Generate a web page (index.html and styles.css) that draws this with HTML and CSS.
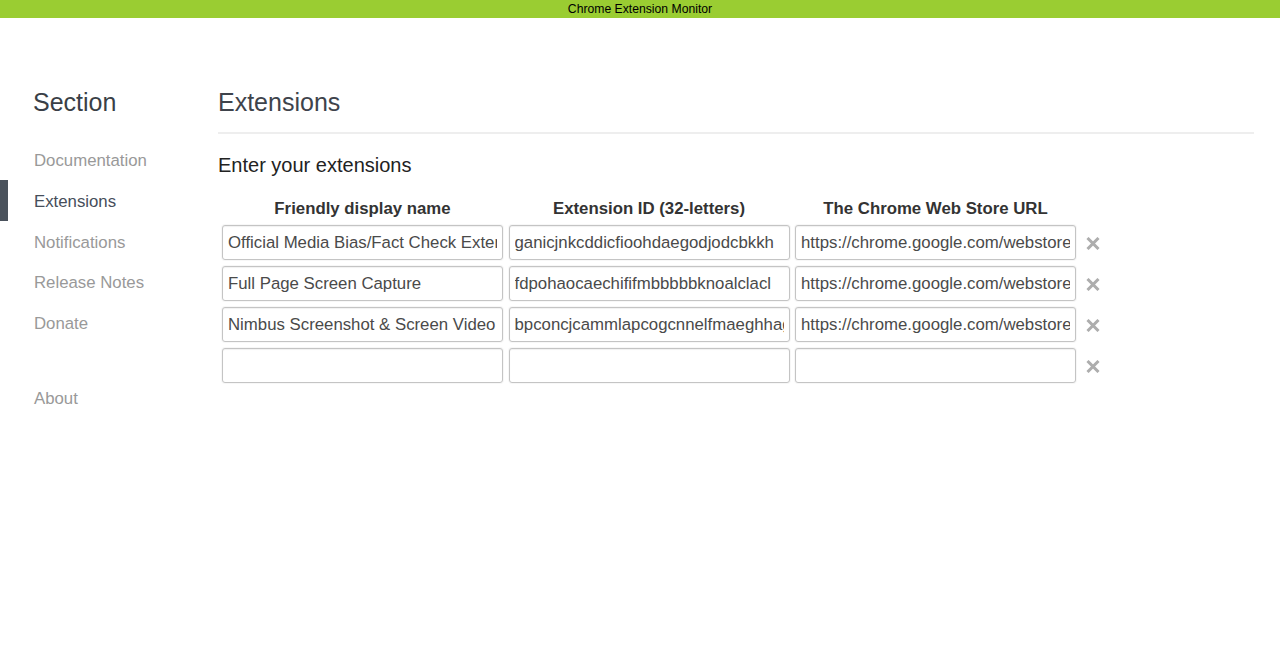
FILE: index.html
```html
<!DOCTYPE html>
<html lang="en">
<head>
<meta charset="utf-8">
<title>Chrome Extension Monitor</title>
<link rel="stylesheet" href="styles.css">
</head>
<body>
<div class="topbar">Chrome Extension Monitor</div>
<div class="layout">
  <nav class="sidebar">
    <h1 class="side-title">Section</h1>
    <ul class="nav">
      <li>Documentation</li>
      <li class="active">Extensions</li>
      <li>Notifications</li>
      <li>Release Notes</li>
      <li>Donate</li>
    </ul>
    <ul class="nav nav-about">
      <li>About</li>
    </ul>
  </nav>
  <main class="content">
    <h1 class="page-title">Extensions</h1>
    <h2 class="sub-title">Enter your extensions</h2>
    <div class="ext-grid">
      <div class="col-head">Friendly display name</div>
      <div class="col-head">Extension ID (32-letters)</div>
      <div class="col-head">The Chrome Web Store URL</div>
      <div class="col-head"></div>

      <input class="field" type="text" value="Official Media Bias/Fact Check Extension">
      <input class="field" type="text" value="ganicjnkcddicfioohdaegodjodcbkkh">
      <input class="field" type="text" value="https://chrome.google.com/webstore/detail/ganicjnkcddicfioohdaegodjodcbkkh">
      <div class="remove"><svg viewBox="0 0 14 13" width="14" height="13"><path d="M1.5 1 L12.5 12 M12.5 1 L1.5 12" stroke="#adadad" stroke-width="3" fill="none"/></svg></div>

      <input class="field" type="text" value="Full Page Screen Capture">
      <input class="field" type="text" value="fdpohaocaechififmbbbbbknoalclacl">
      <input class="field" type="text" value="https://chrome.google.com/webstore/detail/fdpohaocaechififmbbbbbknoalclacl">
      <div class="remove"><svg viewBox="0 0 14 13" width="14" height="13"><path d="M1.5 1 L12.5 12 M12.5 1 L1.5 12" stroke="#adadad" stroke-width="3" fill="none"/></svg></div>

      <input class="field" type="text" value="Nimbus Screenshot &amp; Screen Video Recorder">
      <input class="field" type="text" value="bpconcjcammlapcogcnnelfmaeghhagj">
      <input class="field" type="text" value="https://chrome.google.com/webstore/detail/bpconcjcammlapcogcnnelfmaeghhagj">
      <div class="remove"><svg viewBox="0 0 14 13" width="14" height="13"><path d="M1.5 1 L12.5 12 M12.5 1 L1.5 12" stroke="#adadad" stroke-width="3" fill="none"/></svg></div>

      <input class="field" type="text" value="">
      <input class="field" type="text" value="">
      <input class="field" type="text" value="">
      <div class="remove"><svg viewBox="0 0 14 13" width="14" height="13"><path d="M1.5 1 L12.5 12 M12.5 1 L1.5 12" stroke="#adadad" stroke-width="3" fill="none"/></svg></div>
    </div>
  </main>
</div>
</body>
</html>
```
FILE: styles.css
```css
html, body {
  margin: 0;
  padding: 0;
  background: #ffffff;
  font-family: "Liberation Sans", Arial, sans-serif;
}

.topbar {
  height: 18px;
  line-height: 18px;
  background: #9acd32;
  color: #000;
  text-align: center;
  font-size: 12.2px;
}

.layout {
  display: flex;
  padding-top: 68.5px;
}

.sidebar {
  width: 218px;
  flex: none;
}

.side-title {
  margin: 0;
  padding-left: 33px;
  font-size: 25px;
  line-height: 30px;
  font-weight: normal;
  color: #3a3f47;
}

.nav {
  list-style: none;
  margin: 23px 0 0;
  padding: 0;
}

.nav li {
  box-sizing: border-box;
  height: 40.75px;
  line-height: 40.75px;
  padding-top: 1.5px;
  font-size: 16.8px;
  color: #999;
  border-left: 8px solid transparent;
  padding-left: 26px;
}

.nav li.active {
  color: #464e5a;
  border-left-color: #4a525c;
}

.nav-about {
  margin-top: 34px;
}

.content {
  flex: 1;
  padding-right: 26px;
}

.page-title {
  margin: 0;
  font-size: 25px;
  line-height: 30px;
  font-weight: normal;
  color: #3e434b;
  padding-bottom: 15.5px;
  border-bottom: 2px solid #eeeeee;
}

.sub-title {
  margin: 19.4px 0 0;
  font-size: 20px;
  line-height: 24px;
  font-weight: normal;
  color: #222;
}

.ext-grid {
  margin-top: 20px;
  padding-left: 4px;
  display: grid;
  grid-template-columns: 281px 281px 281px auto;
  column-gap: 5.5px;
  row-gap: 6px;
  justify-content: start;
}

.col-head {
  font-weight: bold;
  font-size: 16.8px;
  line-height: 20px;
  padding-top: 1.6px;
  color: #333;
  text-align: center;
}

.field {
  box-sizing: border-box;
  width: 281px;
  height: 35px;
  margin: 0;
  padding: 2px 5px 0;
  border: 1px solid #c4c4c4;
  border-radius: 3px;
  box-shadow: inset 0 1px 1px rgba(0, 0, 0, 0.06), 0 0 0 1px rgba(0, 0, 0, 0.03);
  font-family: "Liberation Sans", Arial, sans-serif;
  font-size: 16.8px;
  color: #4a4a4a;
  background: #fff;
  outline: none;
}

.remove {
  height: 35px;
  display: flex;
  align-items: center;
  padding-left: 4.5px;
  padding-top: 2px;
  box-sizing: border-box;
}

.remove svg {
  display: block;
}
```
